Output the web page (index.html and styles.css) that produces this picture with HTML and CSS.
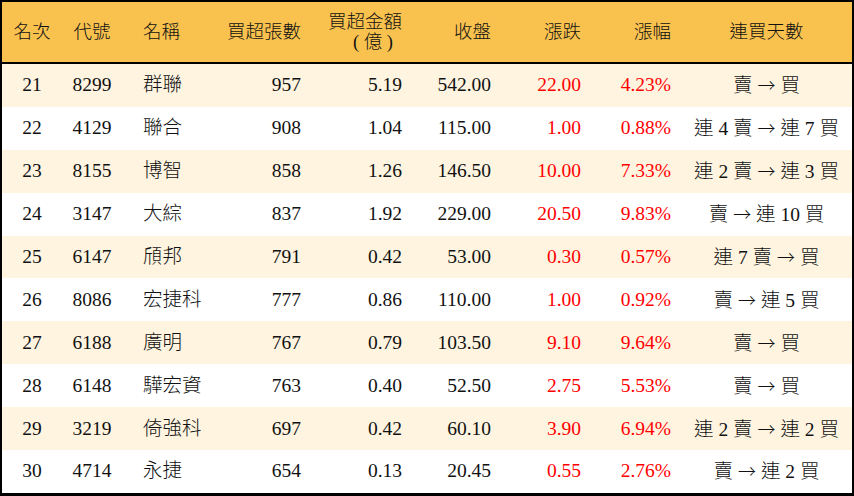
FILE: index.html
```html
<!DOCTYPE html>
<html lang="zh-Hant">
<head>
<meta charset="utf-8">
<link rel="stylesheet" href="styles.css">
</head>
<body>
<div class="board">
  <div class="row head">
    <div class="c ctr">名次</div>
    <div class="c ctr">代號</div>
    <div class="c left">名稱</div>
    <div class="c right">買超張數</div>
    <div class="c right two">買超金額<br><span class="paren">( 億 )</span></div>
    <div class="c right">收盤</div>
    <div class="c right">漲跌</div>
    <div class="c right">漲幅</div>
    <div class="c ctr">連買天數</div>
  </div>
  <div class="row alt">
    <div class="c ctr">21</div><div class="c ctr">8299</div><div class="c left">群聯</div>
    <div class="c right">957</div><div class="c right">5.19</div><div class="c right">542.00</div>
    <div class="c right up">22.00</div><div class="c right up">4.23%</div><div class="c ctr">賣 <span class="arr">→</span> 買</div>
  </div>
  <div class="row">
    <div class="c ctr">22</div><div class="c ctr">4129</div><div class="c left">聯合</div>
    <div class="c right">908</div><div class="c right">1.04</div><div class="c right">115.00</div>
    <div class="c right up">1.00</div><div class="c right up">0.88%</div><div class="c ctr">連 4 賣 <span class="arr">→</span> 連 7 買</div>
  </div>
  <div class="row alt">
    <div class="c ctr">23</div><div class="c ctr">8155</div><div class="c left">博智</div>
    <div class="c right">858</div><div class="c right">1.26</div><div class="c right">146.50</div>
    <div class="c right up">10.00</div><div class="c right up">7.33%</div><div class="c ctr">連 2 賣 <span class="arr">→</span> 連 3 買</div>
  </div>
  <div class="row">
    <div class="c ctr">24</div><div class="c ctr">3147</div><div class="c left">大綜</div>
    <div class="c right">837</div><div class="c right">1.92</div><div class="c right">229.00</div>
    <div class="c right up">20.50</div><div class="c right up">9.83%</div><div class="c ctr">賣 <span class="arr">→</span> 連 10 買</div>
  </div>
  <div class="row alt">
    <div class="c ctr">25</div><div class="c ctr">6147</div><div class="c left">頎邦</div>
    <div class="c right">791</div><div class="c right">0.42</div><div class="c right">53.00</div>
    <div class="c right up">0.30</div><div class="c right up">0.57%</div><div class="c ctr">連 7 賣 <span class="arr">→</span> 買</div>
  </div>
  <div class="row">
    <div class="c ctr">26</div><div class="c ctr">8086</div><div class="c left">宏捷科</div>
    <div class="c right">777</div><div class="c right">0.86</div><div class="c right">110.00</div>
    <div class="c right up">1.00</div><div class="c right up">0.92%</div><div class="c ctr">賣 <span class="arr">→</span> 連 5 買</div>
  </div>
  <div class="row alt">
    <div class="c ctr">27</div><div class="c ctr">6188</div><div class="c left">廣明</div>
    <div class="c right">767</div><div class="c right">0.79</div><div class="c right">103.50</div>
    <div class="c right up">9.10</div><div class="c right up">9.64%</div><div class="c ctr">賣 <span class="arr">→</span> 買</div>
  </div>
  <div class="row">
    <div class="c ctr">28</div><div class="c ctr">6148</div><div class="c left">驊宏資</div>
    <div class="c right">763</div><div class="c right">0.40</div><div class="c right">52.50</div>
    <div class="c right up">2.75</div><div class="c right up">5.53%</div><div class="c ctr">賣 <span class="arr">→</span> 買</div>
  </div>
  <div class="row alt">
    <div class="c ctr">29</div><div class="c ctr">3219</div><div class="c left">倚強科</div>
    <div class="c right">697</div><div class="c right">0.42</div><div class="c right">60.10</div>
    <div class="c right up">3.90</div><div class="c right up">6.94%</div><div class="c ctr">連 2 賣 <span class="arr">→</span> 連 2 買</div>
  </div>
  <div class="row">
    <div class="c ctr">30</div><div class="c ctr">4714</div><div class="c left">永捷</div>
    <div class="c right">654</div><div class="c right">0.13</div><div class="c right">20.45</div>
    <div class="c right up">0.55</div><div class="c right up">2.76%</div><div class="c ctr">賣 <span class="arr">→</span> 連 2 買</div>
  </div>
</div>
</body>
</html>
```

FILE: styles.css
```css
* { box-sizing: border-box; }
html, body { margin: 0; padding: 0; background: #ffffff; }
.board {
  width: 854px;
  height: 496px;
  border-top: 2px solid #000;
  border-left: 2px solid #000;
  border-right: 2px solid #000;
  border-bottom: 3px solid #000;
  background: #ffffff;
  font-family: "Liberation Serif", "Noto Sans CJK TC", serif;
  font-size: 19.5px;
  font-weight: 300;
  color: #111;
  display: flex;
  flex-direction: column;
}
.row {
  display: grid;
  grid-template-columns: 60px 60px 100px 89px 101px 89px 90px 90px 171px;
  align-items: center;
  height: 42.9px;
  flex: none;
}
.row.head {
  height: 62px;
  background: #f9c24f;
  border-bottom: 2px solid #000;
  font-size: 18.5px;
}
.row.alt { background: #fef4e0; }
.c { white-space: nowrap; line-height: 20px; }
.ctr { text-align: center; }
.left { text-align: left; padding-left: 21px; }
.right { text-align: right; padding-right: 10px; }
.two { line-height: 20px; }
.paren { display: inline-block; margin-right: 9px; }
.up { color: #ff0000; }
.arr { font-family: "Noto Sans CJK TC", sans-serif; font-weight: 300; font-size: 18px; }
```
